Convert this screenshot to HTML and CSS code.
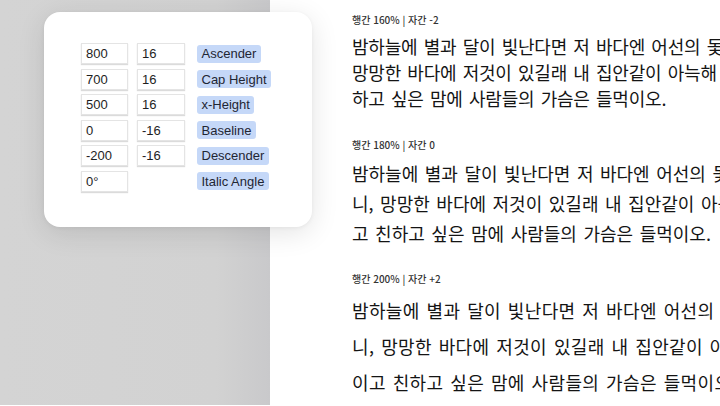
FILE: index.html
```html
<!DOCTYPE html>
<html lang="ko">
<head>
<meta charset="utf-8">
<title>Metrics</title>
<link rel="stylesheet" href="styles.css">
</head>
<body>
<div class="app">
  <aside class="sidebar"></aside>
  <main class="content">
    <section class="sample lh160">
      <p class="caption">행간 160% | 자간 -2</p>
      <p class="text">밤하늘에 별과 달이 빛난다면 저 바다엔 어선의 돛불이 빛나니,<br>망망한 바다에 저것이 있길래 내 집안같이 아늑해 보이고 친<br>하고 싶은 맘에 사람들의 가슴은 들먹이오.</p>
    </section>
    <section class="sample lh180">
      <p class="caption">행간 180% | 자간 0</p>
      <p class="text">밤하늘에 별과 달이 빛난다면 저 바다엔 어선의 돛불이 빛나<br>니, 망망한 바다에 저것이 있길래 내 집안같이 아늑해 보이<br>고 친하고 싶은 맘에 사람들의 가슴은 들먹이오.</p>
    </section>
    <section class="sample lh200">
      <p class="caption">행간 200% | 자간 +2</p>
      <p class="text">밤하늘에 별과 달이 빛난다면 저 바다엔 어선의 돛불이 빛나<br>니, 망망한 바다에 저것이 있길래 내 집안같이 아늑해 보<br>이고 친하고 싶은 맘에 사람들의 가슴은 들먹이오.</p>
    </section>
  </main>
  <div class="panel">
    <div class="metrics">
      <span class="field">800</span><span class="field">16</span><span class="tag">Ascender</span>
      <span class="field">700</span><span class="field">16</span><span class="tag">Cap Height</span>
      <span class="field">500</span><span class="field">16</span><span class="tag">x-Height</span>
      <span class="field">0</span><span class="field">-16</span><span class="tag">Baseline</span>
      <span class="field">-200</span><span class="field">-16</span><span class="tag">Descender</span>
      <span class="field">0°</span><span class="empty"></span><span class="tag">Italic Angle</span>
    </div>
  </div>
</div>
</body>
</html>
```
FILE: styles.css
```css
html, body {
  margin: 0;
  padding: 0;
  background: #ffffff;
  overflow: hidden;
}

.app {
  position: relative;
  display: flex;
  width: 720px;
  height: 406px;
  overflow: hidden;
}

.sidebar {
  flex: none;
  width: 270px;
  height: 405px;
  background: linear-gradient(to right, #d4d4d4 0%, #d2d2d2 80%, #c9c9cb 100%);
}

.content {
  flex: none;
  padding: 13px 0 0 82px;
  display: flex;
  flex-direction: column;
  font-family: "Noto Sans CJK KR", "Noto Sans", sans-serif;
  color: #141414;
  white-space: nowrap;
}

.sample p {
  margin: 0;
}

.lh180 {
  margin-top: 27px;
}

.lh200 {
  margin-top: 24px;
}

.caption {
  font-size: 10px;
  line-height: 14px;
  font-weight: 500;
  color: #333333;
  margin-bottom: 6px !important;
}

.text {
  font-size: 18px;
  word-spacing: 1.5px;
}

.lh160 .text {
  line-height: 26px;
  letter-spacing: -0.22px;
}

.lh180 .text {
  line-height: 30px;
  letter-spacing: 0;
}

.lh200 .text {
  line-height: 36px;
  letter-spacing: 0.34px;
}

.panel {
  position: absolute;
  left: 44px;
  top: 12px;
  width: 268px;
  height: 215px;
  box-sizing: border-box;
  padding: 31px 0 0 37px;
  background: #ffffff;
  border-radius: 16px;
  box-shadow: 0 6px 28px rgba(0, 0, 0, 0.11), 0 1px 4px rgba(0, 0, 0, 0.05);
}

.metrics {
  display: grid;
  grid-template-columns: 47px 48px auto;
  column-gap: 9px;
  row-gap: 4.5px;
  justify-content: start;
  align-items: center;
  font-family: "Liberation Sans", Arial, sans-serif;
  font-size: 13px;
  color: #1e1e1e;
}

.metrics .tag {
  margin-left: 3px;
}

.field {
  box-sizing: border-box;
  height: 21px;
  padding: 0 4px;
  display: flex;
  align-items: center;
  background: #ffffff;
  border: 1px solid #e4e4e4;
  box-shadow: 0 1px 1px rgba(0, 0, 0, 0.14);
}

.empty {
  height: 21px;
}

.tag {
  justify-self: start;
  height: 18px;
  padding: 0 4.5px;
  display: flex;
  align-items: center;
  background: #c5d8f8;
  border-radius: 3px;
  color: #1f2633;
}
```
